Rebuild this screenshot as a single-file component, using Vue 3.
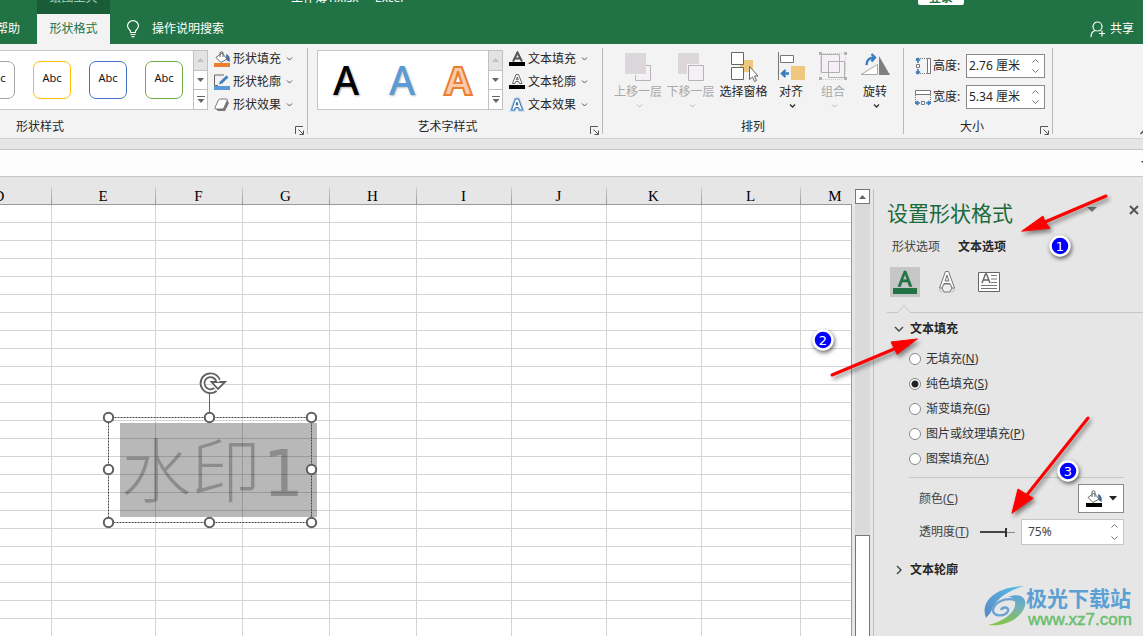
<script setup>
import { ref } from 'vue'

const shapeStyles = [
  { id: 'gray', color: '#a5a5a5' },
  { id: 'gold', color: '#ffc000' },
  { id: 'blue', color: '#4472c4' },
  { id: 'green', color: '#70ad47' }
]
const columns = [
  { name: 'D', width: 104 }, { name: 'E', width: 104 }, { name: 'F', width: 87 },
  { name: 'G', width: 87 }, { name: 'H', width: 87 }, { name: 'I', width: 95 },
  { name: 'J', width: 95 }, { name: 'K', width: 95 }, { name: 'L', width: 99 },
  { name: 'M', width: 0 }
]
const rowCount = 60
const fills = [
  { id: 'none', text: '无填充', key: 'N' },
  { id: 'solid', text: '纯色填充', key: 'S' },
  { id: 'gradient', text: '渐变填充', key: 'G' },
  { id: 'picture', text: '图片或纹理填充', key: 'P' },
  { id: 'pattern', text: '图案填充', key: 'A' }
]
const handles = [
  [108, 417], [209, 417], [311, 417], [108, 469], [311, 469],
  [108, 522], [209, 522], [311, 522]
]
const fill = ref('solid')
const height = ref('2.76 厘米')
const width = ref('5.34 厘米')
const alpha = ref('75%')
</script>

<template>
  <div class="app">
    <header class="top">
      <div class="titlebar">
        <span class="tool-tab">绘图工具</span>
        <span class="doc-title">工作簿1.xlsx&nbsp; -&nbsp; Excel</span>
        <button class="login">登录</button>
      </div>
      <nav class="tabs">
        <button class="tab help">帮助</button>
        <button class="tab active">形状格式</button>
        <button class="tab search">
          <svg width="14" height="18" viewBox="0 0 14 18" fill="none" stroke="#fff" stroke-width="1.2">
            <path d="M4.5 12.5V11C3 9.5 1.5 8 1.5 6a5.5 5.3 0 0 1 11 0c0 2-1.500 3.500-3 5v1.500zM4.500 14.500h5M5.500 16.700h3" />
          </svg>
          <span>操作说明搜索</span>
        </button>
        <button class="tab share">
          <svg width="16" height="17" viewBox="0 0 16 17" fill="none" stroke="#fff" stroke-width="1.2">
            <circle cx="7.500" cy="5.500" r="4.500" /><path d="M1 16c0-3.500 2-6 4.500-6.500M9.500 9.500l1 .5M12 9.500v6M9 12.500h6" />
          </svg>
          <span>共享</span>
        </button>
      </nav>
    </header>

    <section class="ribbon">
      <div class="group g-style">
        <div class="body">
          <div class="gallery shapes">
            <button v-for="s in shapeStyles" :key="s.id" class="swatch" :class="s.id">Abc</button>
          </div>
          <div class="scroller">
            <button class="off" aria-label="上一行"><svg width="7" height="4"><path d="M0 4L3.500 0L7 4z" fill="#c0c0c0" /></svg></button>
            <button aria-label="下一行"><svg width="7" height="4"><path d="M0 0h7L3.500 4z" fill="#666" /></svg></button>
            <button aria-label="其他"><svg width="8" height="8"><path d="M0 .5h8" stroke="#666" /><path d="M.5 3h7L4 7z" fill="#666" /></svg></button>
          </div>
          <div class="menus">
            <button class="menu">
              <svg width="17" height="16" viewBox="0 0 17 16"><path d="M12 3c3 1 4.500 4 3.500 8L12.500 9z" fill="#3c6fa5" /><path d="M2 6.500L8 2l5 6-6 3.500z" fill="#fff" stroke="#666" /><path d="M6 6V1.500q2-1.500 3 0V6" fill="none" stroke="#666" /><path d="M0 12h16v4H0z" fill="#ed7d31" /></svg>
              <span>形状填充</span><svg class="chev" width="7" height="4"><path d="M1 .5L3.500 3L6 .5" fill="none" stroke="#555" /></svg>
            </button>
            <button class="menu">
              <svg width="17" height="16" viewBox="0 0 17 16"><path d="M10 1H.5v10.500H4" fill="none" stroke="#666" /><path d="M5 10.500l1-3L12.500 1.500l2 2L8 9.500z" fill="#3f7ec1" /><path d="M0 12h16v4H0z" fill="#5b9bd5" /></svg>
              <span>形状轮廓</span><svg class="chev" width="7" height="4"><path d="M1 .5L3.500 3L6 .5" fill="none" stroke="#555" /></svg>
            </button>
            <button class="menu">
              <svg width="17" height="16" viewBox="0 0 17 16"><path d="M2 12l2 2h7l4-8-2-3-3 7z" fill="#777" /><path d="M1 10.500L4.500 3Q5 2 6 2h6q2 0 1 2L10 10.500Q9.500 12 8 12H2Q.5 12 1 10.500z" fill="#fff" stroke="#777" /></svg>
              <span>形状效果</span><svg class="chev" width="7" height="4"><path d="M1 .5L3.500 3L6 .5" fill="none" stroke="#555" /></svg>
            </button>
          </div>
        </div>
        <div class="caption"><span>形状样式</span>
          <button class="launch" aria-label="设置形状格式"><svg width="9" height="9"><path d="M.5 8V.5H8M3.500 3.500l4.500 4.500M8.500 4.500v4h-4" fill="none" stroke="#555" /></svg></button>
        </div>
      </div>

      <div class="group g-art">
        <div class="body">
          <div class="gallery art">
            <button class="letter black">A</button>
            <button class="letter sky">A</button>
            <button class="letter orange">A</button>
          </div>
          <div class="scroller">
            <button class="off" aria-label="上一行"><svg width="7" height="4"><path d="M0 4L3.500 0L7 4z" fill="#c0c0c0" /></svg></button>
            <button aria-label="下一行"><svg width="7" height="4"><path d="M0 0h7L3.500 4z" fill="#666" /></svg></button>
            <button aria-label="其他"><svg width="8" height="8"><path d="M0 .5h8" stroke="#666" /><path d="M.5 3h7L4 7z" fill="#666" /></svg></button>
          </div>
          <div class="menus">
            <button class="menu">
              <svg width="17" height="16" viewBox="0 0 17 16"><path d="M4 10.500L8.500 1.500L13 10.500M5.500 7.500h6" fill="none" stroke="#555" stroke-width="2" /><path d="M0 11h16v4H0z" /></svg>
              <span>文本填充</span><svg class="chev" width="7" height="4"><path d="M1 .5L3.500 3L6 .5" fill="none" stroke="#555" /></svg>
            </button>
            <button class="menu">
              <svg width="17" height="16" viewBox="0 0 17 16"><path d="M3.500 9.500L7 .5h2.500L13 9.500h-2.500L9.700 7.500H6.800L6 9.500zM7.300 5.700h2L8.300 3z" fill="#fff" stroke="#666" /><path d="M0 11h16v4H0z" /></svg>
              <span>文本轮廓</span><svg class="chev" width="7" height="4"><path d="M1 .5L3.500 3L6 .5" fill="none" stroke="#555" /></svg>
            </button>
            <button class="menu">
              <svg width="17" height="16" viewBox="0 0 17 16"><path d="M2.500 13L6.500 2h3l4 11h-3l-.8-2.500H6.300L5.500 13zM7 8h2L8 5z" fill="#fff" stroke="#a9cbee" stroke-width="3" /><path d="M2.500 13L6.500 2h3l4 11h-3l-.8-2.500H6.300L5.500 13zM7 8h2L8 5z" fill="#fff" stroke="#3f74b0" /></svg>
              <span>文本效果</span><svg class="chev" width="7" height="4"><path d="M1 .5L3.500 3L6 .5" fill="none" stroke="#555" /></svg>
            </button>
          </div>
        </div>
        <div class="caption"><span>艺术字样式</span>
          <button class="launch" aria-label="设置文本效果"><svg width="9" height="9"><path d="M.5 8V.5H8M3.500 3.500l4.500 4.500M8.500 4.500v4h-4" fill="none" stroke="#555" /></svg></button>
        </div>
      </div>

      <div class="group g-arrange">
        <div class="body">
          <button class="big wide" disabled>
            <svg width="30" height="30" viewBox="0 0 30 30"><path d="M12.500 13.500h15v15h-15z" fill="#f5f0f6" stroke="#b5b5b5" /><path d="M1 1h22v22H1z" fill="#f3f3f3" /><path d="M2 1h21v21H2z" fill="#dbd7da" /></svg>
            <span>上移一层</span><svg class="chev" width="7" height="4"><path d="M1 .5L3.500 3L6 .5" fill="none" stroke="#b5b5b5" /></svg>
          </button>
          <button class="big wide" disabled>
            <svg width="30" height="30" viewBox="0 0 30 30"><path d="M2 1h21v21H2z" fill="#dbd7da" /><path d="M11 12h18v18H11z" fill="#f3f3f3" /><path d="M12.500 13.500h15v15h-15z" fill="#f5f0f6" stroke="#b5b5b5" /></svg>
            <span>下移一层</span><svg class="chev" width="7" height="4"><path d="M1 .5L3.500 3L6 .5" fill="none" stroke="#b5b5b5" /></svg>
          </button>
          <button class="big wide">
            <svg width="30" height="30" viewBox="0 0 30 30"><path d="M11 8h13v12H11z" fill="#edc87e" /><path d="M2.500 .5h12v12h-12zM2.500 15.500h12v12h-12z" fill="#fff" stroke="#666" /><path d="M20.500 14.500v13l3-2.500 2 4.500 2-1-2-4.500h3.500z" fill="#fff" stroke="#666" /></svg>
            <span>选择窗格</span>
          </button>
          <button class="big">
            <svg width="30" height="30" viewBox="0 0 30 30"><path d="M2.500 0v28" stroke="#777" /><path d="M4.500 3.500h13v7h-13z" fill="#fff" stroke="#777" /><path d="M15 14h14v14H15z" fill="#edc87e" /><path d="M13 21.500H6M9.500 18L6 21.500L9.500 25" fill="none" stroke="#3a7cc0" stroke-width="2.400" /></svg>
            <span>对齐</span><svg class="chev" width="7" height="4"><path d="M1 .5L3.500 3L6 .5" fill="none" stroke="#333" stroke-width="1.400" /></svg>
          </button>
          <button class="big" disabled>
            <svg width="30" height="30" viewBox="0 0 30 30"><path d="M3.500 2.500h18v18h-18z" fill="#f5f0f6" stroke="#b0b0b0" /><path d="M10.500 9.500h16v16h-16z" fill="none" stroke="#b0b0b0" /><path d="M2.500 5v18M27.500 5v18M5 1.500h20M5 27.500h20" stroke="#c5c5c5" stroke-dasharray="1 1" /><path d="M1 0h3v3H1zM26 0h3v3h-3zM1 25h3v3H1zM26 25h3v3h-3z" fill="#b0b0b0" /></svg>
            <span>组合</span><svg class="chev" width="7" height="4"><path d="M1 .5L3.500 3L6 .5" fill="none" stroke="#b5b5b5" /></svg>
          </button>
          <button class="big">
            <svg width="30" height="30" viewBox="0 0 30 30"><path d="M1 22.500h16.500v-10z" fill="#fff" stroke="#aaa" /><path d="M19 4v19h11z" fill="#7f7f7f" /><path d="M6.500 13c0-5 3-7.500 8-7.500M11.500 2L15 5.500L11.500 9.500" fill="none" stroke="#3a7cc0" stroke-width="2.400" /></svg>
            <span>旋转</span><svg class="chev" width="7" height="4"><path d="M1 .5L3.500 3L6 .5" fill="none" stroke="#333" stroke-width="1.400" /></svg>
          </button>
        </div>
        <div class="caption"><span>排列</span></div>
      </div>

      <div class="group g-size">
        <div class="body">
          <div class="size-row">
            <svg width="17" height="18" viewBox="0 0 17 18"><path d="M12.500 1.500h3v15h-3z" fill="#fff" stroke="#777" /><path d="M1 1.500h11M1 16.500h11" stroke="#777" stroke-dasharray="1 1" /><path d="M1.500 7.500h3v3h-3z" fill="#fff" stroke="#777" /><path d="M3 1v5M1 3.500L3 1.500l2 2M3 17v-5M1 14.500l2 2 2-2" fill="none" stroke="#3a7cc0" stroke-width="1.700" /></svg>
            <label for="h">高度:</label>
            <span class="spin"><input id="h" v-model="height" /><span class="arrows"><button aria-label="增大高度"><svg width="7" height="4"><path d="M.5 3.500L3.500 .5L6.500 3.500" fill="none" stroke="#777" /></svg></button><button aria-label="减小高度"><svg width="7" height="4"><path d="M.5 .5L3.500 3.500L6.500 .5" fill="none" stroke="#777" /></svg></button></span></span>
          </div>
          <div class="size-row">
            <svg width="17" height="18" viewBox="0 0 17 18"><path d="M.5 2.500h15v4H.5z" fill="#fff" stroke="#777" /><path d="M.5 7v9M15.500 7v9" stroke="#777" stroke-dasharray="1 1" /><path d="M6.500 13.500h3v3h-3z" fill="#fff" stroke="#777" /><path d="M0 15h5M3 13l-2 2 2 2M16 15h-5M13 13l2 2-2 2" fill="none" stroke="#3a7cc0" stroke-width="1.700" /></svg>
            <label for="w">宽度:</label>
            <span class="spin"><input id="w" v-model="width" /><span class="arrows"><button aria-label="增大宽度"><svg width="7" height="4"><path d="M.5 3.500L3.500 .5L6.500 3.500" fill="none" stroke="#777" /></svg></button><button aria-label="减小宽度"><svg width="7" height="4"><path d="M.5 .5L3.500 3.500L6.500 .5" fill="none" stroke="#777" /></svg></button></span></span>
          </div>
        </div>
        <div class="caption"><span>大小</span>
          <button class="launch" aria-label="大小和属性"><svg width="9" height="9"><path d="M.5 8V.5H8M3.500 3.500l4.500 4.500M8.500 4.500v4h-4" fill="none" stroke="#555" /></svg></button>
        </div>
      </div>
      <button class="collapse" aria-label="折叠功能区"><svg width="9" height="6"><path d="M.5 5L4.500 1L8.500 5" fill="none" stroke="#444" stroke-width="1.400" /></svg></button>
    </section>

    <div class="formula">
      <input aria-label="编辑栏" />
      <button aria-label="展开编辑栏"><svg width="8" height="5"><path d="M0 0h8L4 4z" fill="#444" /></svg></button>
    </div>

    <main class="work">
      <div class="sheet">
        <table>
          <colgroup><col v-for="c in columns" :key="c.name" :style="c.width ? { width: c.width + 'px' } : null" /></colgroup>
          <thead><tr><th v-for="c in columns" :key="c.name">{{ c.name }}</th></tr></thead>
          <tbody><tr v-for="r in rowCount" :key="r"><td v-for="c in columns" :key="c.name"></td></tr></tbody>
        </table>
        <svg class="shape" width="360" height="190" viewBox="0 350 360 190">
          <path d="M120 423h197v94H120z" fill="#000" fill-opacity=".28" />
          <text x="121" y="497" class="mark">水印</text>
          <text x="263" y="496" class="digit">1</text>
          <path d="M108.500 417.500h203v105h-203z" fill="none" stroke="#444" stroke-dasharray="2 1" />
          <path d="M209.500 394v19" stroke="#5f5f5f" />
          <circle v-for="(p, i) in handles" :key="i" :cx="p[0] + .5" :cy="p[1] + .5" r="4.700" fill="#fff" stroke="#5f5f5f" stroke-width="2" />
          <path d="M218 380.500a8 8 0 1 0-2.500 9" fill="none" stroke="#5f5f5f" stroke-width="5.600" />
          <path d="M211.500 382H225l-7 7z" fill="#fff" stroke="#5f5f5f" stroke-width="1.800" />
          <path d="M218.500 382a8 8 0 1 0-3 7.500" fill="none" stroke="#fff" stroke-width="2" />
        </svg>
      </div>
      <div class="vscroll">
        <button aria-label="向上滚动"><svg width="7" height="4"><path d="M0 4L3.500 0L7 4z" fill="#666" /></svg></button>
        <div class="track"><div class="thumb"></div></div>
      </div>

      <aside class="pane">
        <div class="pane-head">
          <h1>设置形状格式</h1>
          <button aria-label="任务窗格选项"><svg width="10" height="6"><path d="M0 0h10L5 5z" fill="#777" /></svg></button>
          <button class="close" aria-label="关闭"><svg width="10" height="10"><path d="M1 1l8 8M9 1L1 9" stroke="#555" stroke-width="2" /></svg></button>
        </div>
        <div class="pane-tabs"><button>形状选项</button><button class="on">文本选项</button></div>
        <div class="pane-icons">
          <button class="on" aria-label="文本填充与轮廓"><svg width="30" height="30" viewBox="0 0 30 30"><path d="M8 19.500L14 4h2l6 15.500h-2.700L17.700 15h-5.600l-1.500 4.500zM12.900 12.800h4.100L15 7z" fill="#217346" stroke="#217346" stroke-width=".6" /><path d="M3 21h24v6H3z" fill="#217346" /></svg></button>
          <button aria-label="文字效果"><svg width="30" height="30" viewBox="0 0 30 30"><path d="M7.500 21L13.500 4.500h3L22.500 21h-3l-1.500-4.500h-6L10.500 21zM13 14h4l-2-6z" fill="#fff" stroke="#777" /><path d="M12 17l-2 4 2 4h6l2-4-2-4z" fill="#eee" stroke="#777" /><path d="M7.500 21q0 4 3 4.500M22.500 21q0 4-3 4.500" fill="none" stroke="#bbb" /></svg></button>
          <button aria-label="文本框"><svg width="30" height="30" viewBox="0 0 30 30"><path d="M4.500 5.500h21v19h-21z" fill="#fff" stroke="#666" /><path d="M8 16l3.500-9h1L16 16M9.500 13h5" fill="none" stroke="#666" stroke-width="1.400" /><path d="M17 8.500h6M17 12h6M17 15.500h6M7 18.500h16M7 21.500h16" stroke="#777" /></svg></button>
        </div>
        <svg class="notch" height="10"><path d="M0 8.500H11L17 1l6 7.500H3000" fill="none" stroke="#c6c6c6" /></svg>

        <button class="section"><svg width="10" height="10"><path d="M1 3l4 4 4-4" fill="none" stroke="#444" stroke-width="1.400" /></svg>文本填充</button>
        <div class="radios">
          <label v-for="f in fills" :key="f.id"><input v-model="fill" type="radio" name="fill" :value="f.id" /><span>{{ f.text }}(<u>{{ f.key }}</u>)</span></label>
        </div>
        <div class="settings">
          <div class="setting color-row">
            <label for="color">颜色(<u>C</u>)</label>
            <button id="color"><svg width="17" height="18" viewBox="0 0 17 18"><path d="M12 4c3 1 4.500 4 3.500 8L12.500 10z" fill="#3c6fa5" /><path d="M2 7.500L8 3l5 6-6 3.500z" fill="#fff" stroke="#666" /><path d="M6 7V1.500q2-1.500 3 0V7" fill="none" stroke="#666" /><path d="M0 13h16v4H0z" /></svg><svg width="8" height="5"><path d="M0 0h8L4 4.500z" fill="#222" /></svg></button>
          </div>
          <div class="setting alpha-row">
            <label for="alpha">透明度(<u>T</u>)</label>
            <input class="slider" type="range" min="0" max="100" value="75" aria-label="透明度" />
            <span class="spin"><input id="alpha" v-model="alpha" /><span class="arrows"><button aria-label="增大透明度"><svg width="7" height="4"><path d="M.5 3.500L3.500 .5L6.500 3.500" fill="none" stroke="#777" /></svg></button><button aria-label="减小透明度"><svg width="7" height="4"><path d="M.5 .5L3.500 3.500L6.500 .5" fill="none" stroke="#777" /></svg></button></span></span>
          </div>
        </div>
        <button class="section last"><svg width="10" height="10"><path d="M3 1l4 4-4 4" fill="none" stroke="#444" stroke-width="1.400" /></svg>文本轮廓</button>

        <svg class="notes" width="270" height="459" viewBox="873 177 270 459">
          <defs>
            <linearGradient id="sweep" x1="0" y1="0" x2="0" y2="1"><stop offset="0" stop-color="#5aa3d6" /><stop offset=".45" stop-color="#76b3b4" /><stop offset="1" stop-color="#86c440" /></linearGradient>
            <linearGradient id="crest" x1="0" y1="1" x2="1" y2="0"><stop offset="0" stop-color="#5b87c6" /><stop offset="1" stop-color="#52bfe8" /></linearGradient>
          </defs>
          <g>
            <path d="M986 618C980 603 993 587 1024 586C1007 591 994 600 991 612z" fill="url(#crest)" />
            <path d="M1015 600C1004 597 994 603 993 610C993 617 1005 617 1008 611C1009 607 1003 606 1001 610" fill="none" stroke="#6ba0d2" stroke-width="2.400" />
            <path d="M1008 597C1020 592 1027 598 1025 606C1021 619 1004 627 988 625C1002 622 1013 614 1015 606C1016 600 1013 597 1008 597z" fill="url(#sweep)" />
            <text x="1026" y="606" class="brand">极光下载站</text>
            <text x="1028" y="625" class="site">www.xz7.com</text>
          </g>
          <g class="callout">
            <path d="M1106 196L1045 222" /><path class="tip" d="M1022 231L1043 216L1045 222L1050 228z" />
            <path d="M832 375L894 349" /><path class="tip" d="M917 339L891 342L894 348L897 354z" />
            <path d="M1088 418L1026 496" /><path class="tip" d="M1012 513L1018 489L1026 494L1033 498z" />
          </g>
          <g class="badge">
            <circle cx="1060" cy="246" r="9.500" /><circle cx="823" cy="340" r="9.500" /><circle cx="1068" cy="471" r="9.500" />
          </g>
          <g class="num"><text x="1060" y="251">1</text><text x="823" y="345">2</text><text x="1068" y="476">3</text></g>
        </svg>
      </aside>
    </main>
  </div>
</template>

<style>
html, body { margin: 0; }
body { overflow: hidden; }
</style>

<style scoped>
.app { height: 100vh; display: flex; flex-direction: column; overflow: hidden; background: #e6e6e6; color: #262626; font: 12px/16px "Noto Sans", "Noto Sans CJK SC", sans-serif; }
.app *, .app *::before { box-sizing: border-box; }
button, input { font: inherit; color: inherit; margin: 0; padding: 0; border: 0; background: none; border-radius: 0; outline: 0; }
button { display: flex; align-items: center; justify-content: center; white-space: nowrap; }
svg { flex: none; display: block; }

.top { background: #217346; color: #fff; }
.titlebar { display: flex; height: 14px; overflow: hidden; padding-left: 37px; align-items: flex-start; }
.tool-tab { width: 73px; height: 16px; margin-top: -2px; background: #1a5c38; color: #9fd0b5; text-align: center; line-height: 0; }
.doc-title { margin: -2px 0 0 181px; line-height: 0; white-space: pre; flex: 1; }
.login { width: 46px; height: 7px; overflow: hidden; margin: -2px 179px 0 0; background: #fff; color: #217346; font-weight: 700; line-height: 0; border-radius: 0 0 2px 2px; align-items: flex-start; }
.tabs { display: flex; height: 30px; }
.tab { height: 30px; }
.help { width: 37px; justify-content: flex-end; padding-right: 17px; }
.active { width: 73px; background: #f3f3f3; color: #217346; }
.search { margin-left: 16px; gap: 12px; }
.share { margin-left: auto; padding-right: 9px; gap: 4px; }

.ribbon { position: relative; display: flex; padding-top: 4px; height: 95px; background: #f3f3f3; border-bottom: 1px solid #d2d2d2; flex: none; }
.group { height: 86px; padding-top: 2px; border-right: 1px solid #b8b8b8; display: flex; flex-direction: column; flex: none; }
.body { display: flex; height: 60px; flex: none; }
.caption { position: relative; height: 16px; flex: none; margin-top: 9px; display: flex; justify-content: center; }
.launch { position: absolute; right: 3px; top: 7px; }
.g-style { width: 308px; }
.g-style .caption { justify-content: flex-start; padding-left: 16px; }
.g-art { width: 295px; padding-left: 9px; }
.g-art .caption { padding-right: 24px; }
.g-arrange { width: 301px; padding-left: 9px; }
.g-arrange .caption { padding-right: 9px; }
.g-size { width: 149px; padding: 2px 7px 0 11px; }
.g-size .caption { padding-right: 16px; }
.g-size .launch { right: -4px; }
.gallery { display: flex; align-items: center; background: #fff; border: 1px solid #c6c6c6; border-right: 0; }
.shapes { width: 193px; border-left: 0; justify-content: flex-end; gap: 18px; padding-right: 10px; overflow: hidden; }
.swatch { width: 38px; height: 38px; flex: none; border: 1px solid; border-radius: 7px; color: #111; font-size: 11px; padding-bottom: 4px; }
.gray { border-color: #a5a5a5; }
.gold { border-color: #ffc000; }
.blue { border-color: #4472c4; }
.green { border-color: #70ad47; }
.art { width: 171px; }
.letter { width: 56px; font-size: 40px; line-height: 40px; font-weight: 500; }
.black { color: #000; text-shadow: 1px 1px 2px #aaa; }
.sky { color: #5b9bd5; text-shadow: 1px 1px 2px #bbb; }
.orange { color: #f8cbad; -webkit-text-stroke: 2px #ed7d31; font-weight: 700; }
.scroller { width: 15px; display: flex; flex-direction: column; border: 1px solid #c0c0c0; background: #fff; }
.scroller button { flex: 1; border-top: 1px solid #c0c0c0; }
.scroller .off { background: #e3e3e3; border: 0; }
.menus { display: flex; flex-direction: column; padding-left: 6px; margin-top: -3px; }
.menu { height: 23px; flex: none; gap: 2px; }
.chev { margin-left: 3px; }
.big { width: 42px; flex: none; flex-direction: column; justify-content: flex-start; padding-top: 2px; color: #262626; }
.big span { margin-top: 2px; }
.wide { width: 53px; }
.wide:first-child { width: 52px; }
.big:disabled { color: #a8a8a8; }
.big .chev { margin: 4px 0 0 3px; flex: none; }
.g-size .body { flex-direction: column; gap: 7px; padding-top: 4px; }
.size-row { display: flex; align-items: center; height: 24px; }
.size-row label { width: 34px; padding-left: 1px; white-space: nowrap; }
.spin { display: flex; align-items: center; background: #fff; border: 1px solid #8a8a8a; height: 24px; flex: 1; min-width: 0; }
.spin input { flex: 1; min-width: 0; width: 0; padding-left: 2px; }
.arrows { display: flex; flex-direction: column; gap: 6px; padding-right: 5px; }
.collapse { position: absolute; right: -6px; bottom: 3px; }

.formula { display: flex; flex: none; margin-top: 10px; height: 28px; background: #fdfdfd; border: solid #c6c6c6; border-width: 1px 0; overflow: hidden; }
.formula input { flex: 1; min-width: 0; }
.formula button { margin-right: -6px; }

.work { flex: 1; display: flex; min-height: 0; }
.sheet { flex: 1; min-width: 0; position: relative; overflow: hidden; }
.sheet::after { content: ""; position: absolute; top: 27px; right: 0; bottom: 0; width: 1px; background: #999; }
table { margin-left: -52px; width: calc(100% + 71px); table-layout: fixed; border-collapse: separate; border-spacing: 0; }
th { height: 28px; padding: 12px 2px 0 0; border-bottom: 1px solid #999; color: #000; font: 15px/15px "Liberation Serif", serif; background: linear-gradient(#d0d0d0, #999) right bottom / 1px 17px no-repeat #e6e6e6; }
td { height: 18px; padding: 0; background: #fff; border: solid #d4d4d4; border-width: 0 1px 1px 0; }
.shape { position: absolute; left: 0; top: 173px; }
.mark { font: 300 70px "Noto Sans CJK SC", sans-serif; fill: #000; fill-opacity: .24; }
.digit { font: 64px "DejaVu Sans", sans-serif; fill: #000; fill-opacity: .24; }
.vscroll { width: 15px; flex: none; margin: 12px 3px 0; display: flex; flex-direction: column; background: #dadada; }
.vscroll button { height: 15px; background: #fff; border: 1px solid #777; }
.track { flex: 1; display: flex; flex-direction: column; justify-content: flex-end; }
.thumb { height: 101px; background: #fff; border: 1px solid #777; border-bottom: 0; }

.pane { position: relative; width: 270px; flex: none; margin-top: 12px; border-left: 1px solid #c0c0c0; }
.pane-head { display: flex; height: 49px; padding: 0 4px 0 13px; }
.pane-head h1 { flex: 1; margin: 9px 0 0; font-size: 21px; line-height: 30px; font-weight: 400; color: #1a6a3c; }
.pane-head button { height: 10px; margin-top: 16px; margin-right: 32px; }
.pane-head .close { margin-right: 0; }
.pane-tabs { display: flex; height: 18px; gap: 18px; padding-left: 18px; }
.pane-tabs button { color: #444; }
.pane-tabs .on, .section { font-weight: 700; color: #262626; }
.pane-icons { display: flex; gap: 12px; padding: 11px 0 0 16px; }
.pane-icons .on { background: #c6c6c6; }
.notch { width: calc(100% - 13px); margin: 7px 0 0 13px; }
.section { height: 16px; margin: 7px 0 0 20px; gap: 6px; }
.radios { display: flex; flex-direction: column; gap: 9px; padding: 14px 0 0 35px; }
.radios label { display: flex; align-items: center; height: 16px; gap: 5px; color: #333; }
.radios input { appearance: none; width: 12px; height: 12px; border: 1px solid #8a8a8a; border-radius: 50%; background: #fff; }
.radios input:checked { background: radial-gradient(circle, #222 3px, #fff 4px); }
.settings { margin: 10px 19px 0 35px; padding: 6px 0 0 10px; border-top: 1px solid #c6c6c6; color: #444; }
.setting { display: flex; align-items: center; }
.color-row { justify-content: space-between; height: 29px; }
.color-row button { width: 46px; height: 29px; background: #fff; border: 1px solid #8a8a8a; gap: 6px; }
.alpha-row { margin-top: 6px; height: 26px; }
.alpha-row label { width: 61px; white-space: nowrap; }
.slider { appearance: none; width: 35px; height: 10px; background: linear-gradient(#444, #444) left center / 26px 2px no-repeat, linear-gradient(#888, #888) center / 100% 1px no-repeat; }
.slider::-webkit-slider-thumb { appearance: none; width: 2px; height: 9px; background: #333; }
.alpha-row .spin { margin-left: 6px; height: 26px; border-color: #c6c6c6; }
.alpha-row .spin input { padding-left: 6px; }
.alpha-row .arrows { gap: 8px; }
.section.last { margin-top: 17px; }
.notes { position: absolute; left: -1px; top: -12px; overflow: visible; pointer-events: none; }
.brand { font: 700 21px "Noto Sans CJK SC", sans-serif; fill: #5b9fd4; }
.site { font: 17px "Liberation Sans", sans-serif; fill: #6cbf70; stroke: #6cbf70; stroke-width: .5px; }
.callout { fill: none; stroke: #f00; stroke-width: 3; stroke-linecap: round; filter: drop-shadow(2px 3px 2px rgba(0, 0, 0, .45)); }
.callout .tip { fill: #f00; stroke-width: 1; }
.badge { fill: #00f; stroke: #fff; stroke-width: 2.500px; filter: drop-shadow(1px 2px 2px rgba(0, 0, 0, .6)); }
.num { font: 13px "DejaVu Sans", sans-serif; fill: #fff; text-anchor: middle; }
</style>
